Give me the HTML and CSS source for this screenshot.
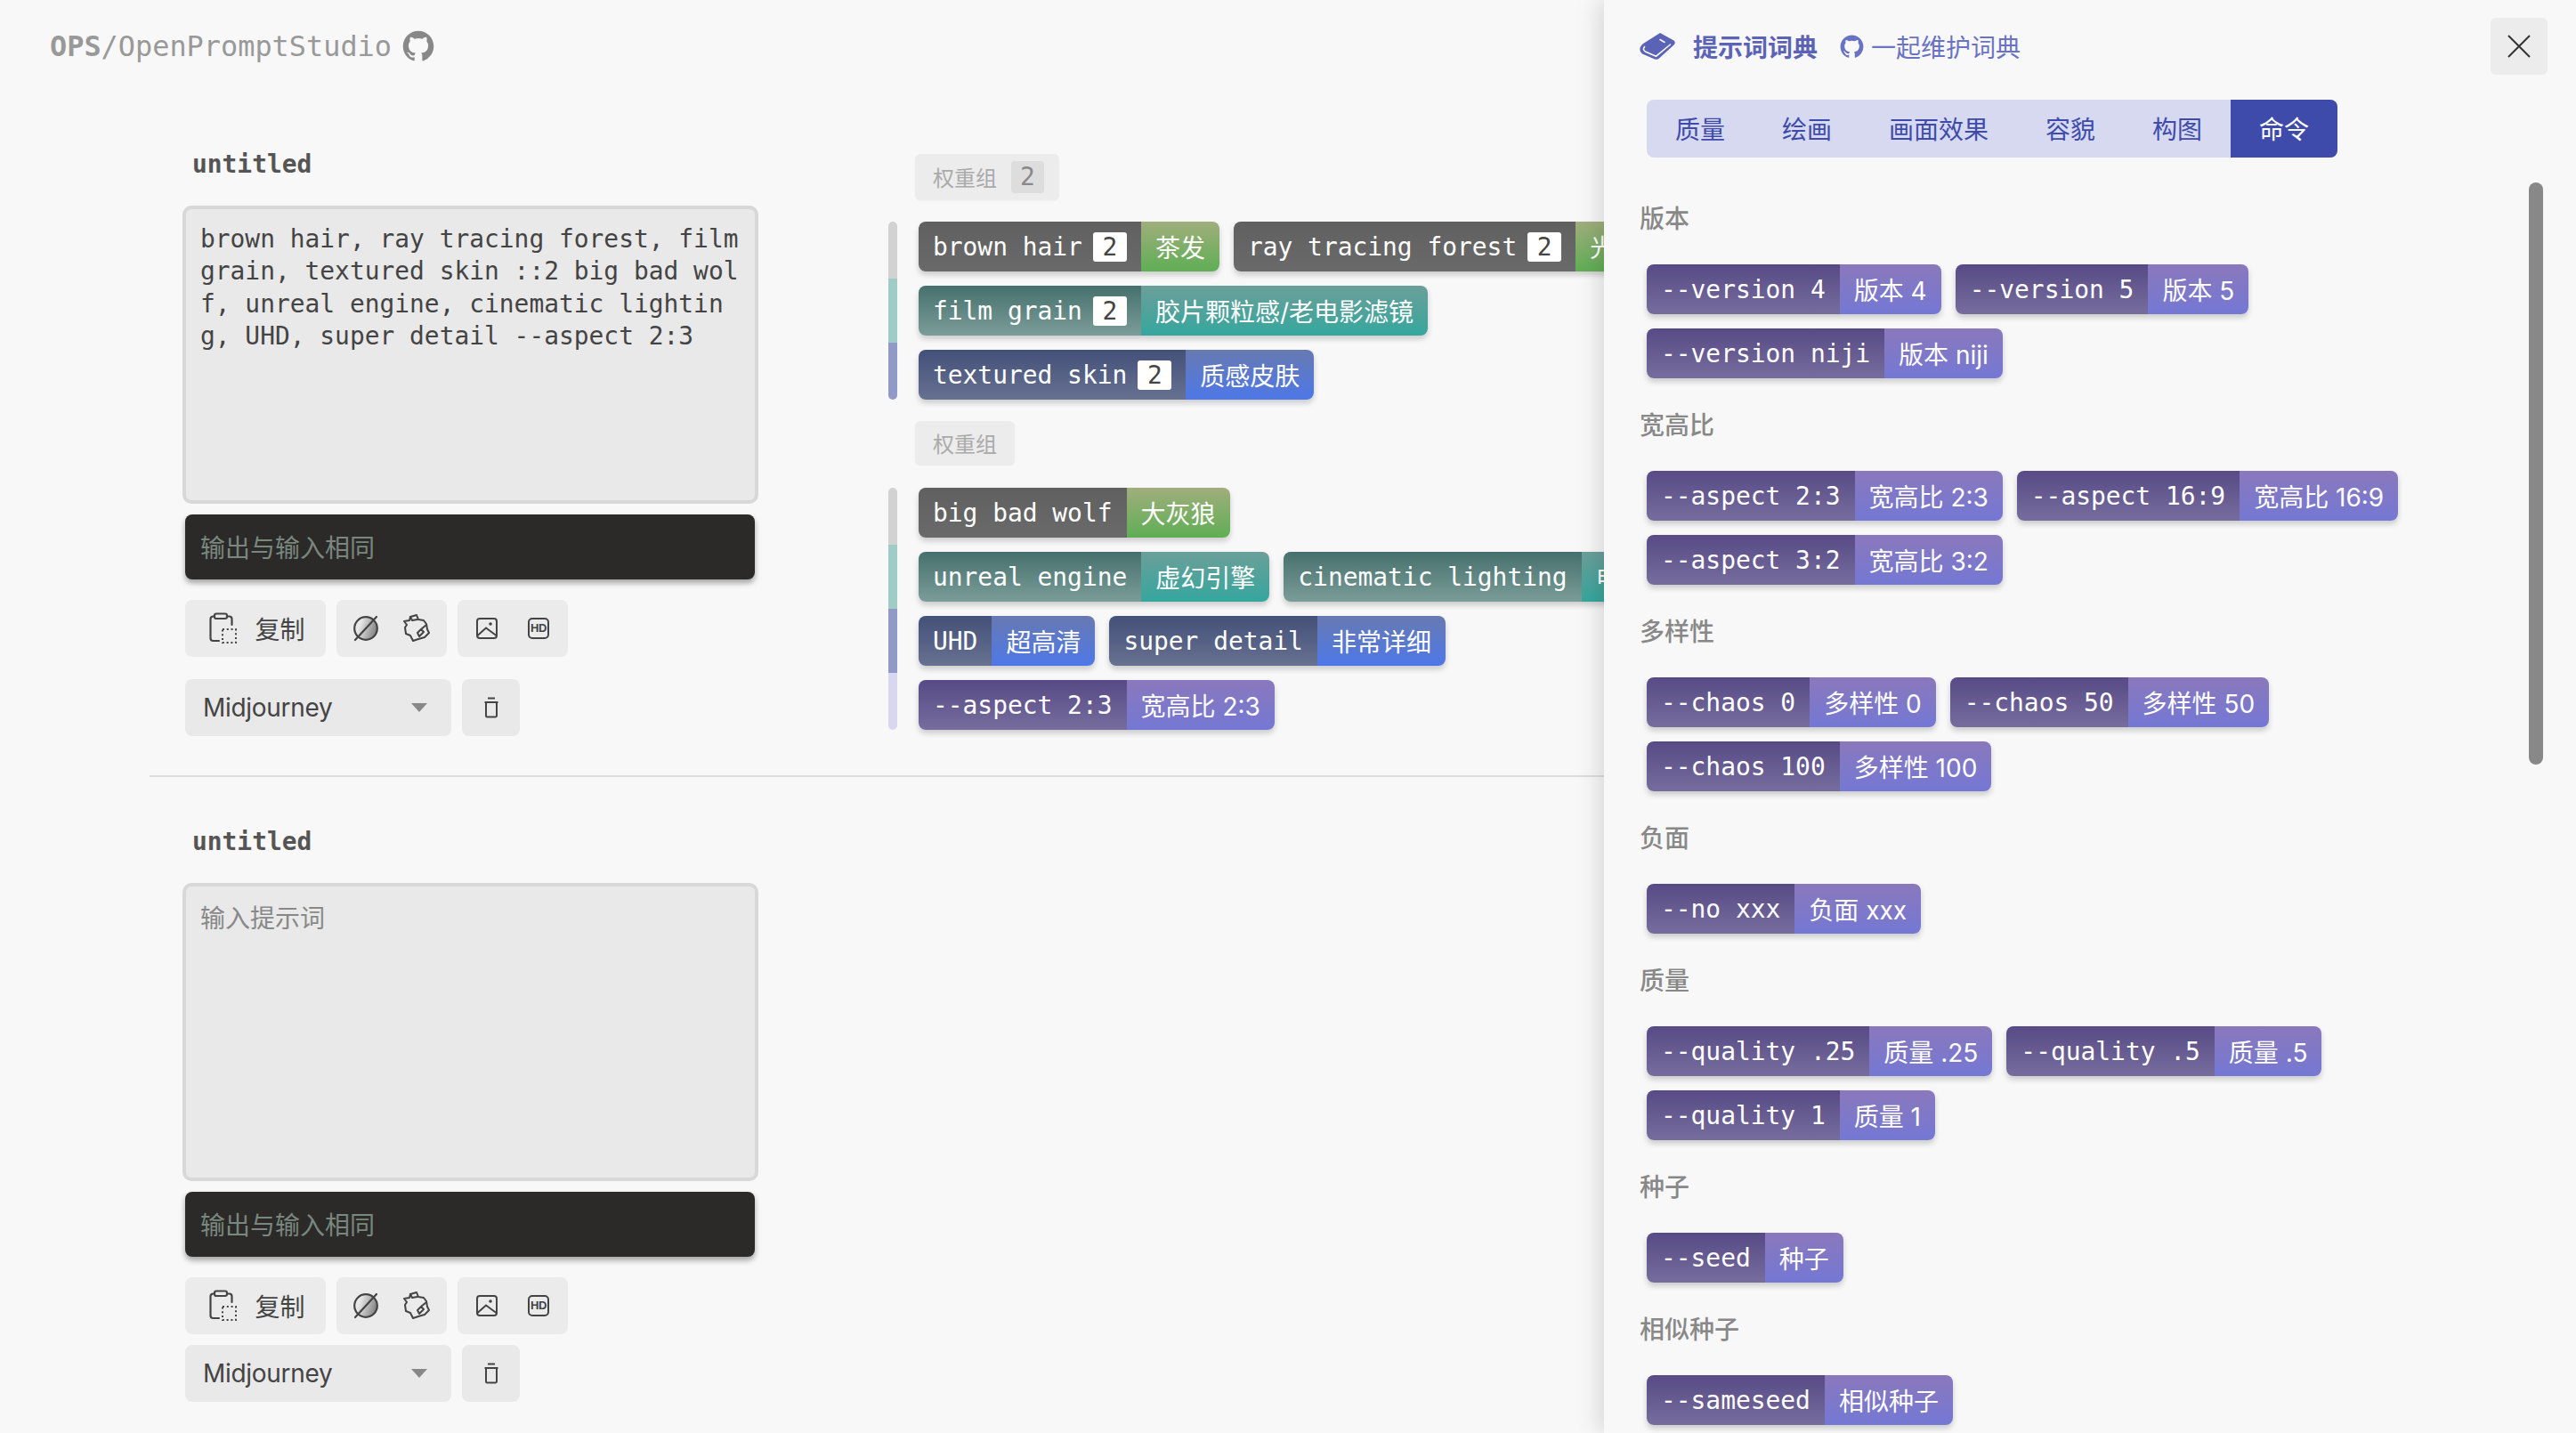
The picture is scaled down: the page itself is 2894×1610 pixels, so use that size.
FILE: index.html
```html
<!DOCTYPE html>
<html lang="zh">
<head>
<meta charset="utf-8">
<title>OpenPromptStudio</title>
<link rel="stylesheet" href="styles.css">
</head>
<body>
<svg class="defs" width="0" height="0" aria-hidden="true">
  <defs>
    <symbol id="gh" viewBox="0 0 24 24"><path fill="currentColor" d="M12 .5C5.65.5.5 5.65.5 12c0 5.08 3.29 9.39 7.86 10.91.58.1.79-.25.79-.56v-2.14c-3.2.7-3.87-1.36-3.87-1.36-.52-1.33-1.28-1.68-1.28-1.68-1.05-.71.08-.7.08-.7 1.15.08 1.76 1.19 1.76 1.19 1.03 1.76 2.69 1.25 3.34.96.1-.75.4-1.25.73-1.54-2.55-.29-5.24-1.28-5.24-5.69 0-1.26.45-2.28 1.19-3.09-.12-.29-.52-1.46.11-3.05 0 0 .97-.31 3.17 1.18a11 11 0 0 1 5.77 0c2.2-1.49 3.17-1.18 3.17-1.18.63 1.59.23 2.76.11 3.05.74.81 1.19 1.83 1.19 3.09 0 4.42-2.69 5.39-5.26 5.68.41.36.78 1.06.78 2.13v3.16c0 .31.21.67.8.56A11.5 11.5 0 0 0 23.5 12C23.5 5.65 18.35.5 12 .5z"/></symbol>
    <symbol id="i-copy" viewBox="0 0 32 36"><g fill="none" stroke="currentColor" stroke-width="2.2" stroke-linecap="round"><path d="M11 32H4.500A3 3 0 0 1 1.500 29V7.500A3 3 0 0 1 4.500 4.500H6M20 4.500h2.500A3 3 0 0 1 25.500 7.500V14"/><rect x="6" y="1.500" width="14" height="5.500" rx="2"/></g><rect x="15" y="19" width="15" height="15" fill="none" stroke="currentColor" stroke-width="2" stroke-dasharray="2 2.800"/></symbol>
    <linearGradient id="shade" x1="0" y1="0" x2="1" y2="0.300"><stop offset="0.300" stop-color="#e8e8e8"/><stop offset="1" stop-color="#8a8a8a"/></linearGradient>
    <symbol id="i-none" viewBox="0 0 28 32"><circle cx="14" cy="16" r="12.800" fill="url(#shade)" stroke="#444" stroke-width="2.200"/><path d="M2 29 26 3" stroke="#444" stroke-width="2.200" stroke-linecap="round"/></symbol>
    <symbol id="i-crumple" viewBox="0 0 30 32"><g fill="none" stroke="#444" stroke-width="2" stroke-linejoin="round" stroke-linecap="round"><path d="M8 3 15 1l2 5 6 1 3 4 1 6 2 4-5 5-7 2-6 2-3-6-5-2-1-7 2-3-3-4 6-1z"/><path d="M8 3l2 4 6-1M20 17l6-5M18 25l-2-4 4-4 3 3-5 5"/></g></symbol>
    <symbol id="i-image" viewBox="0 0 24 24"><g fill="none" stroke="currentColor" stroke-width="2"><rect x="1" y="1" width="22" height="22" rx="3"/><path d="M1.500 20 11 11.500 22.500 20"/></g><circle cx="16" cy="7" r="1.800" fill="currentColor"/></symbol>
    <symbol id="i-trash" viewBox="0 0 16 24"><g fill="none" stroke="currentColor" stroke-width="2"><path d="M2 6h12v15a1.500 1.500 0 0 1-1.500 1.500h-9A1.500 1.500 0 0 1 2 21z"/><path d="M4 1.500h8M.5 6h15" /></g></symbol>
    <symbol id="i-book" viewBox="0 0 40 30"><path fill="currentColor" d="M23 0 38.500 8.500Q41 11 38.500 13.500L22 28.500Q20 30.500 17 29.500L3 23.500Q-1 20.500 1 15.500Q2 13.500 4 12z"/><path d="M5.500 15.500Q3 19 6.500 21L18.500 26.200 34.500 13M23 7.500 28 10.500" fill="none" stroke="#f8f8f8" stroke-width="1.600" stroke-linecap="round"/></symbol>
  </defs>
</svg>

<main class="app">
  <header class="brand">
    <span><b class="brand-strong">OPS</b>/OpenPromptStudio</span>
    <svg class="brand-gh"><use href="#gh"/></svg>
  </header>

  <section class="work work-first">
    <div class="col-input">
      <h2 class="name">untitled</h2>
      <div class="area">brown hair, ray tracing forest, film grain, textured skin ::2 big bad wolf, unreal engine, cinematic lighting, UHD, super detail --aspect 2:3</div>
      <div class="out">输出与输入相同</div>
      <div class="tools">
        <button class="btn btn-copy"><svg class="ic-copy"><use href="#i-copy"/></svg><span>复制</span></button>
        <button class="btn btn-two"><svg class="ic-none"><use href="#i-none"/></svg><svg class="ic-crumple"><use href="#i-crumple"/></svg></button>
        <button class="btn btn-three"><svg class="ic-image"><use href="#i-image"/></svg><span class="hd">HD</span></button>
      </div>
      <div class="pick pick-far">
        <div class="select"><span>Midjourney</span><i class="caret"></i></div>
        <button class="btn btn-trash"><svg class="ic-trash"><use href="#i-trash"/></svg></button>
      </div>
    </div>
    <div class="col-tags">
      <div class="glabel"><span>权重组</span><em class="gnum">2</em></div>
      <div class="rows">
        <div class="row"><i class="bar bar-gray"></i><div class="tags">
          <div class="tag t-gray"><span class="en">brown hair<b class="w">2</b></span><span class="zh">茶发</span></div>
          <div class="tag t-gray"><span class="en">ray tracing forest<b class="w">2</b></span><span class="zh">光线追踪森林</span></div>
        </div></div>
        <div class="row"><i class="bar bar-teal"></i><div class="tags">
          <div class="tag t-teal"><span class="en">film grain<b class="w">2</b></span><span class="zh">胶片颗粒感/老电影滤镜</span></div>
        </div></div>
        <div class="row"><i class="bar bar-blue"></i><div class="tags">
          <div class="tag t-blue"><span class="en">textured skin<b class="w">2</b></span><span class="zh">质感皮肤</span></div>
        </div></div>
      </div>
      <div class="glabel glabel-plain"><span>权重组</span></div>
      <div class="rows rows-plain">
        <div class="row"><i class="bar bar-gray"></i><div class="tags">
          <div class="tag t-gray"><span class="en">big bad wolf</span><span class="zh">大灰狼</span></div>
        </div></div>
        <div class="row"><i class="bar bar-teal"></i><div class="tags">
          <div class="tag t-teal"><span class="en">unreal engine</span><span class="zh">虚幻引擎</span></div>
          <div class="tag t-teal"><span class="en">cinematic lighting</span><span class="zh">电影灯光</span></div>
        </div></div>
        <div class="row"><i class="bar bar-blue"></i><div class="tags">
          <div class="tag t-blue"><span class="en">UHD</span><span class="zh">超高清</span></div>
          <div class="tag t-blue"><span class="en">super detail</span><span class="zh">非常详细</span></div>
        </div></div>
        <div class="row"><i class="bar bar-lav"></i><div class="tags">
          <div class="tag t-purple"><span class="en">--aspect 2:3</span><span class="zh">宽高比 2:3</span></div>
        </div></div>
      </div>
    </div>
  </section>

  <section class="work work-second">
    <div class="col-input">
      <h2 class="name">untitled</h2>
      <div class="area area-empty">输入提示词</div>
      <div class="out">输出与输入相同</div>
      <div class="tools">
        <button class="btn btn-copy"><svg class="ic-copy"><use href="#i-copy"/></svg><span>复制</span></button>
        <button class="btn btn-two"><svg class="ic-none"><use href="#i-none"/></svg><svg class="ic-crumple"><use href="#i-crumple"/></svg></button>
        <button class="btn btn-three"><svg class="ic-image"><use href="#i-image"/></svg><span class="hd">HD</span></button>
      </div>
      <div class="pick">
        <div class="select"><span>Midjourney</span><i class="caret"></i></div>
        <button class="btn btn-trash"><svg class="ic-trash"><use href="#i-trash"/></svg></button>
      </div>
    </div>
  </section>
</main>

<aside class="drawer">
  <div class="d-head">
    <svg class="d-book"><use href="#i-book"/></svg>
    <strong class="d-title">提示词词典</strong>
    <svg class="d-gh"><use href="#gh"/></svg>
    <span class="d-link">一起维护词典</span>
    <button class="d-close"><svg viewBox="0 0 26 26" class="d-x"><path d="M1 1l24 24M25 1 1 25" stroke="#333" stroke-width="2" fill="none"/></svg></button>
  </div>
  <nav class="d-tabs">
    <span class="d-tab">质量</span><span class="d-tab">绘画</span><span class="d-tab">画面效果</span><span class="d-tab">容貌</span><span class="d-tab">构图</span><span class="d-tab d-tab-on">命令</span>
  </nav>
  <i class="d-scroll"></i>
  <div class="d-body">
    <h3 class="d-h">版本</h3>
    <div class="d-tags">
      <div class="tag t-purple"><span class="en">--version 4</span><span class="zh">版本 4</span></div>
      <div class="tag t-purple"><span class="en">--version 5</span><span class="zh">版本 5</span></div>
      <div class="tag t-purple"><span class="en">--version niji</span><span class="zh">版本 niji</span></div>
    </div>
    <h3 class="d-h">宽高比</h3>
    <div class="d-tags">
      <div class="tag t-purple"><span class="en">--aspect 2:3</span><span class="zh">宽高比 2:3</span></div>
      <div class="tag t-purple"><span class="en">--aspect 16:9</span><span class="zh">宽高比 16:9</span></div>
      <div class="tag t-purple"><span class="en">--aspect 3:2</span><span class="zh">宽高比 3:2</span></div>
    </div>
    <h3 class="d-h">多样性</h3>
    <div class="d-tags">
      <div class="tag t-purple"><span class="en">--chaos 0</span><span class="zh">多样性 0</span></div>
      <div class="tag t-purple"><span class="en">--chaos 50</span><span class="zh">多样性 50</span></div>
      <div class="tag t-purple"><span class="en">--chaos 100</span><span class="zh">多样性 100</span></div>
    </div>
    <h3 class="d-h">负面</h3>
    <div class="d-tags">
      <div class="tag t-purple"><span class="en">--no xxx</span><span class="zh">负面 xxx</span></div>
    </div>
    <h3 class="d-h">质量</h3>
    <div class="d-tags">
      <div class="tag t-purple"><span class="en">--quality .25</span><span class="zh">质量 .25</span></div>
      <div class="tag t-purple"><span class="en">--quality .5</span><span class="zh">质量 .5</span></div>
      <div class="tag t-purple"><span class="en">--quality 1</span><span class="zh">质量 1</span></div>
    </div>
    <h3 class="d-h">种子</h3>
    <div class="d-tags">
      <div class="tag t-purple"><span class="en">--seed</span><span class="zh">种子</span></div>
    </div>
    <h3 class="d-h">相似种子</h3>
    <div class="d-tags">
      <div class="tag t-purple"><span class="en">--sameseed</span><span class="zh">相似种子</span></div>
    </div>
  </div>
</aside>
</body>
</html>
```

FILE: styles.css
```css
* { box-sizing: border-box; }
html, body { height: 100%; }
body {
  margin: 0;
  height: 1610px;
  overflow: hidden;
  background: #f8f8f8;
  color: #444;
  font-family: "Inter", "Noto Sans CJK SC", sans-serif;
  font-size: 28px;
}
.defs { display: block; height: 0; }
.app { width: 2894px; }
.brand {
  display: flex;
  align-items: center;
  height: 40px;
  margin: 32px 0 0 56px;
  font: 31.9px/40px "DejaVu Sans Mono", monospace;
  color: #999;
}
.brand-strong { font-weight: 700; }
.brand-gh { width: 36px; height: 36px; margin-left: 12px; color: #888; }

.work { display: flex; margin-left: 168px; align-items: flex-start; }
.work-first { padding: 94px 0 44px; border-bottom: 2px solid #ddd; }
.work-second { padding-top: 54px; }
.col-input { width: 684px; margin-left: 37px; flex: none; }
.name {
  margin: 0 0 28px 11px;
  font: 700 27.9px/37px "DejaVu Sans Mono", monospace;
  color: #555;
}
.area {
  width: 647px;
  height: 335px;
  padding: 16px;
  border: 4px solid #d8d8d8;
  border-radius: 10px;
  background: #e9e9e9;
  font: 27.9px/36.4px "DejaVu Sans Mono", "Noto Sans CJK SC", monospace;
  color: #444;
  word-break: break-all;
}
.area-empty { font-family: "Noto Sans CJK SC", sans-serif; font-size: 28px; color: #888; }
.out {
  width: 640px;
  height: 73px;
  margin: 12px 0 0 3px;
  padding-left: 17px;
  border-radius: 8px;
  background: #2b2a29;
  box-shadow: 0 4px 6px rgba(0,0,0,.35);
  font: 28px/73px "Noto Sans CJK SC", sans-serif;
  color: #7a877f;
}
.tools { display: flex; gap: 12px; margin: 23px 0 0 3px; }
.btn {
  display: flex;
  align-items: center;
  justify-content: center;
  height: 64px;
  padding: 0;
  border: 0;
  border-radius: 8px;
  background: #ebebeb;
  color: #444;
  font: 28px "Noto Sans CJK SC", sans-serif;
}
.btn-copy { width: 158px; gap: 19px; padding-left: 4px; }
.btn-two { width: 124px; gap: 28px; }
.btn-three { width: 124px; gap: 34px; }
.ic-copy { width: 32px; height: 36px; }
.ic-none { width: 28px; height: 32px; }
.ic-crumple { width: 30px; height: 32px; }
.ic-image { width: 24px; height: 24px; }
.hd {
  display: block;
  width: 24px;
  height: 24px;
  border: 2px solid #444;
  border-radius: 5px;
  font: 700 13px/20px "Liberation Sans", sans-serif;
  letter-spacing: -.3px;
  text-align: center;
}
.pick { display: flex; gap: 12px; margin: 12px 0 0 3px; }
.pick-far { margin-top: 25px; }
.select {
  display: flex;
  align-items: center;
  justify-content: space-between;
  width: 299px;
  height: 64px;
  padding: 0 27px 0 20px;
  border-radius: 8px;
  background: #e9e9e9;
  font: 28px "Inter", sans-serif;
  letter-spacing: -.3px;
}
.caret { width: 0; height: 0; border: 9px solid transparent; border-top: 10px solid #888; border-bottom: 0; }
.btn-trash { width: 65px; background: #e9e9e9; }
.ic-trash { width: 16px; height: 24px; }

.col-tags { margin-left: 139px; padding-top: 7px; }
.glabel {
  display: inline-flex;
  align-items: center;
  gap: 16px;
  height: 52px;
  padding: 0 17px 2px 20px;
  border-radius: 6px;
  background: #ececec;
  color: #aaa;
  font: 24px "Noto Sans CJK SC", sans-serif;
  box-shadow: 0 1px 2px rgba(0,0,0,.03);
}
.gnum {
  width: 37px;
  height: 36px;
  margin-top: 2px;
  border-radius: 4px;
  background: #ddd;
  color: #888;
  font: 27.9px/36px "DejaVu Sans Mono", monospace;
  text-align: center;
}
.glabel-plain { height: 50px; padding: 0 20px 2px; margin-top: 24px; }
.rows { margin: 24px 0 0 -30px; display: flex; flex-direction: column; }
.rows-plain { margin-top: 25px; }
.row { display: flex; gap: 24px; }
.bar { flex: none; width: 10px; }
.row:first-child .bar { border-radius: 5px 5px 0 0; }
.row:last-child .bar { border-radius: 0 0 5px 5px; }
.bar-gray { background: #d2d2d2; }
.bar-teal { background: #9fccc6; }
.bar-blue { background: #9199c6; }
.bar-lav { background: #d8d7ef; }
.tags { display: flex; gap: 16px; padding: 8px 0; flex-wrap: nowrap; }
.row:first-child .tags { padding-top: 0; }
.row:last-child .tags { padding-bottom: 0; }

.tag {
  display: flex;
  flex: none;
  height: 56px;
  border-radius: 8px;
  overflow: hidden;
  color: #fff;
  box-shadow: 0 4px 6px rgba(0,0,0,.18);
}
.en {
  display: flex;
  align-items: center;
  padding: 0 16px;
  white-space: pre;
  font: 27.9px "DejaVu Sans Mono", monospace;
}
.zh {
  display: flex;
  align-items: center;
  padding: 0 16px;
  white-space: pre;
  font: 28px "Inter", "Noto Sans CJK SC", sans-serif;
}
.w {
  display: block;
  width: 38px;
  height: 33px;
  margin-left: 12px;
  border-radius: 3px;
  background: #fff;
  color: #444;
  font: 27.9px/33px "DejaVu Sans Mono", monospace;
  text-align: center;
}
.t-gray .en { background: linear-gradient(#606060, #6a6a6a); }
.t-gray .zh { background: linear-gradient(#a0ae7c, #5fae55); }
.t-teal .en { background: linear-gradient(#46706d, #7b9d99); }
.t-teal .zh { background: linear-gradient(#6b9f99, #35a79e); }
.t-blue .en { background: linear-gradient(#435078, #677191); }
.t-blue .zh { background: linear-gradient(#6779b1, #4e78e8); }
.t-purple .en { background: linear-gradient(#574a86, #776d9d); }
.t-purple .zh { background: linear-gradient(#8a78bc, #7478d4); }

.drawer {
  position: absolute;
  top: 0;
  right: 0;
  width: 1092px;
  height: 1610px;
  overflow: hidden;
  background: #f8f8f8;
  box-shadow: -6px 0 24px rgba(0,0,0,.13);
}
.d-head { display: flex; align-items: center; height: 64px; margin: 20px 32px 0 40px; }
.d-book { width: 40px; height: 30px; color: #5b63b6; }
.d-title { margin-left: 20px; color: #5b63b6; font: 700 28px "Noto Sans CJK SC", sans-serif; }
.d-gh { width: 27px; height: 27px; margin-left: 25px; color: #6a72c4; }
.d-link { margin-left: 8px; color: #6a72c4; font: 28px "Noto Sans CJK SC", sans-serif; }
.d-close {
  display: flex;
  align-items: center;
  justify-content: center;
  width: 64px;
  height: 64px;
  margin-left: auto;
  padding: 0;
  border: 0;
  border-radius: 6px;
  background: #ececec;
}
.d-x { width: 26px; height: 26px; }
.d-tabs {
  display: inline-flex;
  height: 65px;
  margin: 28px 0 0 48px;
  border-radius: 8px;
  overflow: hidden;
  background: #d6d9f0;
}
.d-tab { padding: 0 32px; color: #3f4baa; font: 28px/65px "Noto Sans CJK SC", sans-serif; }
.d-tab-on { background: #3f4bab; color: #fff; }
.d-scroll {
  position: absolute;
  top: 205px;
  right: 37px;
  width: 16px;
  height: 654px;
  border-radius: 8px;
  background: #888;
}
.d-body { margin-top: -2px; padding: 0 0 0 40px; }
.d-h {
  margin: 33px 0 0;
  height: 36px;
  color: #888;
  font: 500 28px/36px "Noto Sans CJK SC", sans-serif;
}
.d-h:first-child { margin-top: 51px; }
.d-tags { display: flex; flex-wrap: wrap; gap: 16px; width: 990px; margin: 35px 0 0 8px; }
```
